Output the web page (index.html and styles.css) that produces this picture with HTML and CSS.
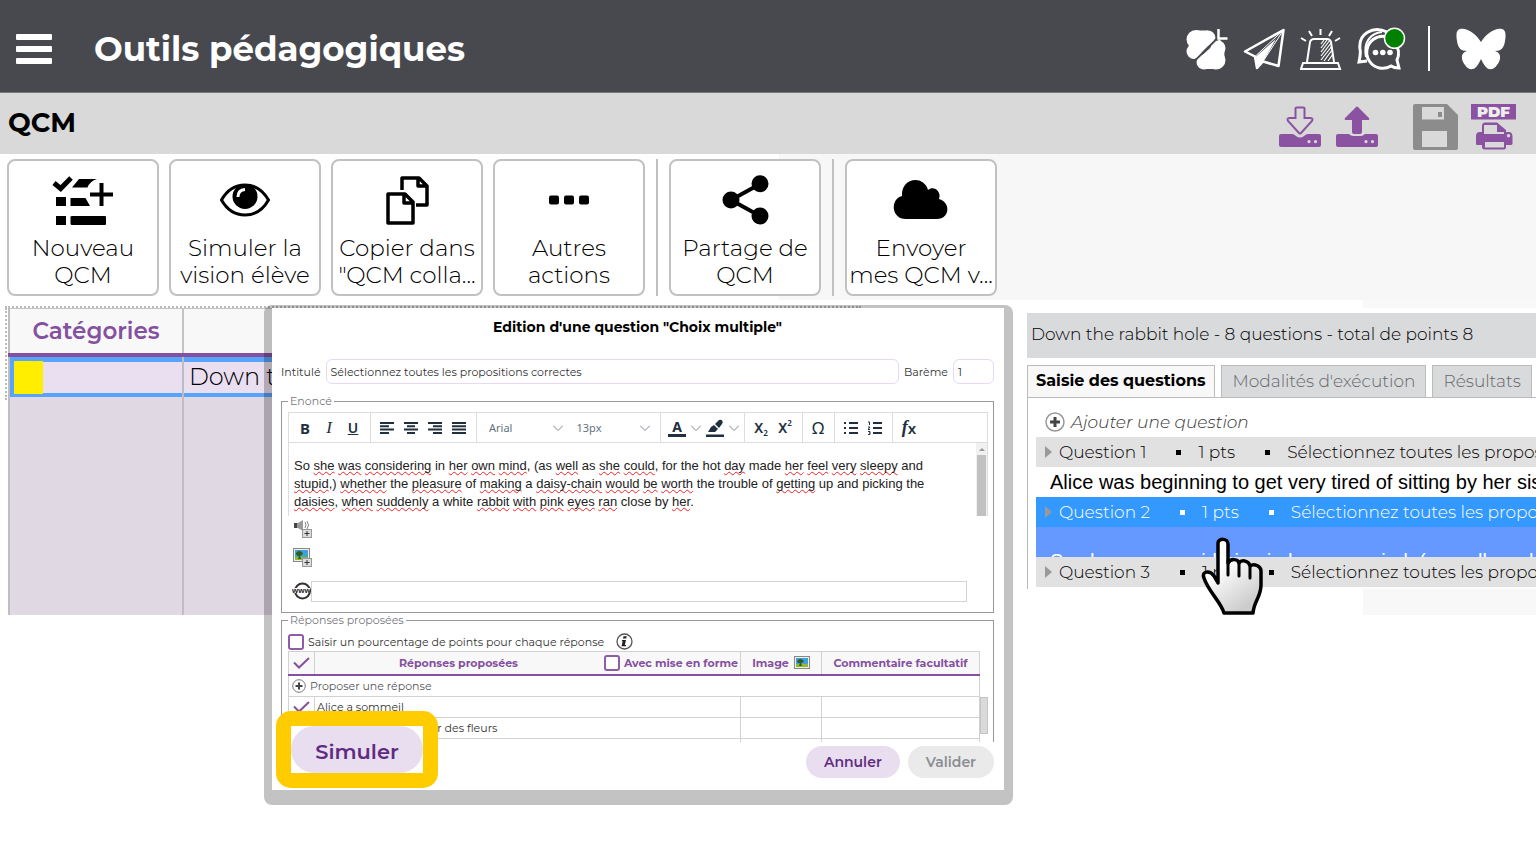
FILE: index.html
```html
<!DOCTYPE html>
<html lang="fr">
<head>
<meta charset="utf-8">
<title>Outils pédagogiques - QCM</title>
<link rel="stylesheet" href="styles.css">
</head>
<body>
<header class="topbar">
  <button class="icon-btn" aria-label="Menu"><svg width="36" height="30" viewBox="0 0 36 30" fill="#fff"><rect width="36" height="6" rx="1"/><rect y="12" width="36" height="6" rx="1"/><rect y="24" width="36" height="6" rx="1"/></svg></button>
  <h1 class="app-title">Outils pédagogiques</h1>
  <nav class="top-icons">
    <button class="icon-btn" aria-label="Trèfle"><svg width="42" height="42" viewBox="0 0 42 42" fill="#fff"><clipPath id="up"><path d="M0 0H30V10L9 31H0Z"/></clipPath><clipPath id="down"><path d="M42 9H34L10 33V42H42Z"/></clipPath><g clip-path="url(#up)"><circle cx="10" cy="11.500" r="9.500"/><circle cx="22" cy="10" r="7.500"/><circle cx="8" cy="23.500" r="7.500"/><path d="M2 12H29V30H8Z"/><path d="M10 2.500H22V14H10Z"/></g><g clip-path="url(#down)"><circle cx="30" cy="32" r="9.500"/><circle cx="32" cy="20" r="7.500"/><circle cx="18" cy="34" r="7.500"/><path d="M11 32 34 11 38.500 24 38 33 30 41H20Z"/></g><path d="M32.500 1v9.500h9" fill="none" stroke="#fff" stroke-width="2.500"/></svg></button>
    <button class="icon-btn" aria-label="Envoyer"><svg width="42" height="42" viewBox="0 0 42 42" fill="none" stroke="#fff" stroke-width="2.500" stroke-linejoin="round"><path d="M40.500 2 2 23.500 12 28.500 14 40 20 33.500 35.500 38Z"/><path d="M40.500 2 12 28.500 14 40 20 33.500Z" stroke-width="1"/><path d="M33 11 20 33.500 14 40 13 28.500Z" fill="#fff" stroke="none"/></svg></button>
    <button class="icon-btn" aria-label="Alerte"><svg width="42" height="42" viewBox="0 0 42 42" fill="none" stroke="#fff" stroke-width="2"><path d="M1 41h39l-2-6H3ZM7 34 10 14Q11 11 14 11H27Q30 11 31 14L34 34M20.500 1v6M9 3l3 5M32 3l-3 5M1 10l5 3M40 10l-5 3"/><path d="M21 16l3-4M21 20l6-8M21 24l9-12M21 28l10-13M21 32l11-14M24 33l8-11M28 33l5-7" stroke-width="1.200"/></svg></button>
    <button class="icon-btn" aria-label="Messagerie"><svg width="50" height="46" viewBox="0 0 50 46"><path d="M30 6C16-1 1 8 3 23Q4 27 2 36L10 35" fill="none" stroke="#fff" stroke-width="3"/><path d="M25 6C13 7 6 17 9 31" fill="none" stroke="#fff" stroke-width="2"/><path d="M38 16A16 16 0 1 0 34 40Q37 42 42 42Q41 38 40 34Q44 26 38 16Z" fill="none" stroke="#fff" stroke-width="3"/><g fill="#fff"><circle cx="18.500" cy="26.500" r="2.800"/><circle cx="25.800" cy="26.500" r="2.800"/><circle cx="33" cy="26.500" r="2.800"/></g><circle cx="37.500" cy="12.300" r="10" fill="green" stroke="#fff" stroke-width="1.500"/></svg></button>
    <span class="top-sep"></span>
    <button class="icon-btn" aria-label="Papillon"><svg width="50" height="42" viewBox="0 0 50 42" fill="#fff"><path d="M25 14C21 7 11-1 4 1C0 2 0 7 1 13C2 20 5 23 11 23C4 25 5 32 9 37C13 43 18 42 21 38C23 35 24 33 25 31C26 33 27 35 29 38C32 42 37 43 41 37C45 32 46 25 39 23C45 23 48 20 49 13C50 7 50 2 46 1C39-1 29 7 25 14Z"/></svg></button>
  </nav>
</header>
<div class="subbar">
  <h2 class="page-title">QCM</h2>
  <div class="sub-icons">
    <button class="icon-btn" aria-label="Importer"><svg width="42" height="42" viewBox="0 0 42 42" fill="#8b52a1"><path d="M16.500 2.500Q16.500 1.500 17.500 1.500H24.500Q25.500 1.500 25.500 2.500V12H31.500Q34.500 12.500 33 15L22 27Q21 28 20 27L9 15Q7.500 12.500 10.500 12H16.500Z" fill="none" stroke="#8b52a1" stroke-width="2"/><path fill-rule="evenodd" d="M2 28H13Q15 28 17 30Q21 33 25 30Q27 28 29 28H40Q42 28 42 30V39Q42 41 40 41H2Q0 41 0 39V30Q0 28 2 28ZM30 34a1.600 1.600 0 1 0 .01 0ZM36.500 34a1.600 1.600 0 1 0 .01 0Z"/></svg></button>
    <button class="icon-btn" aria-label="Exporter"><svg width="42" height="42" viewBox="0 0 42 42" fill="#8b52a1"><path d="M20 1Q21 0 22 1L33 12Q34 14 32 14H26V26Q26 28 24 28H18Q16 28 16 26V14H10Q8 14 9 12Z"/><path fill-rule="evenodd" d="M2 28H13Q15 30 17 30H25Q27 30 29 28H40Q42 28 42 30V39Q42 41 40 41H2Q0 41 0 39V30Q0 28 2 28ZM30 34a1.600 1.600 0 1 0 .01 0ZM36.500 34a1.600 1.600 0 1 0 .01 0Z"/></svg></button>
    <button class="icon-btn save" aria-label="Enregistrer"><svg width="46" height="46" viewBox="0 0 46 46" fill="#8c8c8c"><path fill-rule="evenodd" d="M2 0H34L45 11V44Q45 46 43 46H2Q0 46 0 44V2Q0 0 2 0ZM9 3V15.500H31V3ZM9 27V43H34V27ZM25 8h4v5h-4Z"/></svg></button>
    <button class="icon-btn" aria-label="Imprimer en PDF"><svg width="46" height="46" viewBox="0 0 46 46" fill="#8b52a1"><rect width="45" height="15.500"/><text x="22.500" y="13" text-anchor="middle" class="pdf-text">PDF</text><path fill-rule="evenodd" d="M11 22Q11 18.500 14 18.500H26L35 26V28H38Q41 28 41.500 32V40Q41 41 40 41H35V43Q35 45.500 33 45.500H14Q11 45.500 11 43V41H6Q5 41 5 40V32Q5 28 9 28H11ZM13 21V30H33V28H26V21ZM14 38V43.500H33V38ZM37.500 30a1.700 1.700 0 1 0 .01 0Z"/></svg></button>
  </div>
</div>
<div class="toolbar">
  <button class="tool"><svg width="62" height="52" viewBox="0 0 62 52"><path d="M2 9 8.700 14.500 19 4" fill="none" stroke="#000" stroke-width="5"/><path d="M27 5H45Q38 7 35.500 13.500H20ZM4 23h10v9H4ZM18.500 24h15L38 32H18.500ZM4 42h10v9H4ZM20 42H53Q54 42 54 43V50Q54 51 53 51H20Q18.500 51 18.500 49.500V43Q18.500 42 20 42Z"/><path d="M49.500 9V32M38 20.500H61" stroke="#000" stroke-width="4"/></svg><span>Nouveau<br>QCM</span></button>
  <button class="tool"><svg width="62" height="52" viewBox="0 0 62 52"><path d="M7.500 26Q16 11 31 11T54.500 26Q46 41 31 41T7.500 26Z" fill="none" stroke="#000" stroke-width="3"/><circle cx="31" cy="22.500" r="12.500"/><path d="M24 23Q24 16 31 15.500" fill="none" stroke="#fff" stroke-width="3"/></svg><span>Simuler la<br>vision élève</span></button>
  <button class="tool"><svg width="62" height="52" viewBox="0 0 62 52" fill="none" stroke="#000" stroke-width="4" stroke-linejoin="round"><path d="M26 16V4H43L51 12V31H40M42 4V12H50" stroke-width="3.500"/><path d="M12 20H29L37 28V49H12ZM28 20V29H37" stroke-width="3.500"/></svg><span>Copier dans<br>"QCM colla...</span></button>
  <button class="tool"><svg width="62" height="52" viewBox="0 0 62 52"><rect x="11" y="21.500" width="10" height="9" rx="2"/><rect x="26" y="21.500" width="10" height="9" rx="2"/><rect x="41" y="21.500" width="10" height="9" rx="2"/></svg><span>Autres<br>actions</span></button>
  <span class="tool-sep"></span>
  <button class="tool"><svg width="62" height="52" viewBox="0 0 62 52"><path d="M46 10 17 26 46 42" fill="none" stroke="#000" stroke-width="4"/><circle cx="46" cy="9.700" r="8.500"/><circle cx="17" cy="26" r="8.500"/><circle cx="46" cy="42" r="8.500"/></svg><span>Partage de<br>QCM</span></button>
  <span class="tool-sep"></span>
  <button class="tool"><svg width="62" height="52" viewBox="0 0 62 52"><path d="M16 45C1 45 0 25 12 22C11 3 34 1 38 16C43 11 52 17 49 25C61 28 60 45 47 45Z"/></svg><span>Envoyer<br>mes QCM v...</span></button>
</div>
<main class="workspace">
  <section class="list-area">
    <div class="list-frame">
      <table class="qcm-table">
        <thead><tr><th class="cat-col">Catégories</th><th></th></tr></thead>
        <tbody>
          <tr class="selected"><td><span class="swatch"></span></td><td>Down t</td></tr>
          <tr class="filler"><td></td><td></td></tr>
        </tbody>
      </table>
    </div>
  </section>
  <section class="detail">
    <div class="strip"></div>
    <div class="detail-head">Down the rabbit hole - 8 questions - total de points 8</div>
    <div class="tabs">
      <button class="tab active">Saisie des questions</button>
      <button class="tab">Modalités d'exécution</button>
      <button class="tab">Résultats</button>
    </div>
    <div class="tab-body">
      <button class="add-question"><svg width="20" height="20" viewBox="0 0 20 20" fill="none"><circle cx="10" cy="10" r="9" stroke="#999" stroke-width="1.500"/><path d="M10 5v10M5 10h10" stroke="#444" stroke-width="3"/></svg><span>Ajouter une question</span></button>
      <div class="q-row"><i class="tri"></i><span>Question 1</span><i class="dot"></i><span>1 pts</span><i class="dot"></i><span>Sélectionnez toutes les propositions correctes</span></div>
      <div class="q-text">Alice was beginning to get very tired of sitting by her sister on the bank</div>
      <div class="q-row current"><i class="tri"></i><span>Question 2</span><i class="dot"></i><span>1 pts</span><i class="dot"></i><span>Sélectionnez toutes les propositions correctes</span></div>
      <div class="q-text current-text">So she was considering in her own mind, (as well as she could, for the hot day</div>
      <div class="q-row"><i class="tri"></i><span>Question 3</span><i class="dot"></i><span>1 pts</span><i class="dot"></i><span>Sélectionnez toutes les propositions correctes</span></div>
    </div>
    <div class="strip tall"></div>
    <svg class="hand" width="64" height="80" viewBox="0 0 64 80"><defs><linearGradient id="skin" x2=".6" y2="1"><stop offset=".4" stop-color="#fff"/><stop offset="1" stop-color="#ccc"/></linearGradient></defs><path d="M17 6C17 1 27 1 27 7V26C30 21 37 22 38 26C41 22 48 24 49 29C53 26 60 29 60 34V48C60 60 53 64 52 76H23C20 65 7 54 3 41C0 34 9 33 13 39L17 46Z" fill="url(#skin)" stroke="#000" stroke-width="3.500" stroke-linejoin="round"/><path d="M27 24V38M38 27V39M49 30V41" stroke="#000" stroke-width="3" stroke-linecap="round"/></svg>
  </section>

  <div class="modal" role="dialog" aria-labelledby="dlg-title">
    <h3 class="modal-title" id="dlg-title">Edition d'une question "Choix multiple"</h3>
    <div class="form-row">
      <label for="intitule">Intitulé</label>
      <input class="field grow" id="intitule" value="Sélectionnez toutes les propositions correctes">
      <label for="bareme">Barème</label>
      <input class="field short" id="bareme" value="1">
    </div>
    <fieldset class="group">
      <legend>Enoncé</legend>
      <div class="editor">
        <div class="ed-bar">
          <div class="ed-group"><button class="ed-btn bold">B</button><button class="ed-btn italic">I</button><button class="ed-btn underline">U</button></div>
          <div class="ed-group">
            <button class="ed-btn" aria-label="Gauche"><svg width="14" height="12" viewBox="0 0 14 12"><path d="M0 1h14M0 4.300h9M0 7.600h14M0 11h9"/></svg></button>
            <button class="ed-btn" aria-label="Centre"><svg width="14" height="12" viewBox="0 0 14 12"><path d="M0 1h14M3 4.300h8M0 7.600h14M3 11h8"/></svg></button>
            <button class="ed-btn" aria-label="Droite"><svg width="14" height="12" viewBox="0 0 14 12"><path d="M0 1h14M5 4.300h9M0 7.600h14M5 11h9"/></svg></button>
            <button class="ed-btn" aria-label="Justifier"><svg width="14" height="12" viewBox="0 0 14 12"><path d="M0 1h14M0 4.300h14M0 7.600h14M0 11h14"/></svg></button>
          </div>
          <div class="ed-group selects">
            <select class="ed-select" aria-label="Police"><option>Arial</option></select><svg class="chev" width="10" height="6" viewBox="0 0 10 6"><path d="M0 .5 5 5.500 10 .5"/></svg>
            <select class="ed-select" aria-label="Taille"><option>13px</option></select><svg class="chev" width="10" height="6" viewBox="0 0 10 6"><path d="M0 .5 5 5.500 10 .5"/></svg>
          </div>
          <div class="ed-group colors">
            <button class="ed-btn color-a">A</button><svg class="chev" width="10" height="6" viewBox="0 0 10 6"><path d="M0 .5 5 5.500 10 .5"/></svg>
            <button class="ed-btn" aria-label="Surligner"><svg class="pen" width="18" height="18" viewBox="0 0 18 18"><path d="M0 15.500h18v2.500H0ZM2 13 5 8 8 6 12 10 9 13ZM9 5 13 1Q15 0 16.500 2Q17 4 16 5L13 9Z"/></svg></button><svg class="chev" width="10" height="6" viewBox="0 0 10 6"><path d="M0 .5 5 5.500 10 .5"/></svg>
          </div>
          <div class="ed-group"><button class="ed-btn math">X<sub>2</sub></button><button class="ed-btn math">X<sup>2</sup></button></div>
          <div class="ed-group"><button class="ed-btn omega">Ω</button></div>
          <div class="ed-group">
            <button class="ed-btn" aria-label="Puces"><svg width="14" height="12" viewBox="0 0 14 12"><path d="M5 1h9M5 6h9M5 11h9M0 1h2M0 6h2M0 11h2"/></svg></button>
            <button class="ed-btn" aria-label="Numéros"><svg width="14" height="14" viewBox="0 0 14 14"><path d="M5 2h9M5 7h9M5 12h9"/><path d="M0 1h1.500v3M0 6h2L0 8.500h2M0 10.500h2v3H0M1 12h1" class="thin"/></svg></button>
          </div>
          <div class="ed-group"><button class="ed-btn fx"><i>f</i>x</button></div>
        </div>
        <div class="ed-body">
          <p class="ed-text">So <u>she</u> <u>was</u> <u>considering</u> in <u>her</u> <u>own</u> <u>mind</u>, (as <u>well</u> as <u>she</u> <u>could</u>, for the hot <u>day</u> made <u>her</u> <u>feel</u> <u>very</u> <u>sleepy</u> and <u>stupid</u>,) <u>whether</u> the <u>pleasure</u> of <u>making</u> a <u>daisy-chain</u> <u>would</u> <u>be</u> <u>worth</u> the trouble of <u>getting</u> up and picking the <u>daisies</u>, <u>when</u> <u>suddenly</u> a white <u>rabbit</u> <u>with</u> <u>pink</u> <u>eyes</u> <u>ran</u> close by <u>her</u>.</p>
          <div class="ed-scroll"><i></i></div>
        </div>
      </div>
      <div class="media">
        <button class="icon-btn" aria-label="Ajouter un son"><svg width="19" height="19" viewBox="0 0 19 19"><path d="M1 4H5L10 1V12L5 9H1Z" fill="#999"/><path d="M1 4H4V9H1Z" fill="#444"/><path d="M12 3Q14 6 12 9M14 2Q17 6 14 10" fill="none" stroke="#888"/><rect x="9.500" y="10.500" width="9" height="8" fill="#ddd" stroke="#999"/><path d="M14 12v5M11.500 14.500h5" stroke="#333"/></svg></button>
        <button class="icon-btn" aria-label="Ajouter une image"><svg width="19" height="19" viewBox="0 0 19 19"><rect x=".5" y=".5" width="16" height="13" fill="#eee" stroke="#888"/><rect x="2" y="2" width="13" height="10" fill="#3fa0e0"/><path d="M2 9h13v3H2Z" fill="#8dbb2c"/><path d="M3 5Q6 1 10 5Q9 8 7 8L8 11H5L6 8Q3 8 3 5Z" fill="#345c14"/><rect x="9.500" y="10.500" width="9" height="8" fill="#ddd" stroke="#999"/><path d="M14 12v5M11.500 14.500h5" stroke="#333"/></svg></button>
      </div>
      <div class="www-row">
        <svg width="19" height="19" viewBox="0 0 19 19"><circle cx="10.500" cy="9" r="7.500" fill="#fff" stroke="#333" stroke-width="2"/><rect y="6" width="18" height="5" fill="#fff"/><text x="0" y="11" class="www-text">www</text></svg>
        <input class="url" aria-label="Lien">
      </div>
    </fieldset>
    <div class="clip">
      <fieldset class="group answers">
        <legend>Réponses proposées</legend>
        <div class="pct-row"><input type="checkbox" class="check" id="pct"><label for="pct">Saisir un pourcentage de points pour chaque réponse</label><svg width="17" height="17" viewBox="0 0 17 17"><circle cx="8.500" cy="8.500" r="7.500" fill="#fff" stroke="#555" stroke-width="1.300"/><path d="M7.500 3.200h3.200l-.5 2.200H7ZM6 7h4l-1.200 5h1.200v1.300H5.500L6.700 8.300H5.800Z" fill="#222"/></svg></div>
        <div class="answers-wrap">
          <table class="answers-table">
            <colgroup><col class="c-check"><col><col class="c-img"><col class="c-com"></colgroup>
            <thead><tr><th><svg width="17" height="12" viewBox="0 0 17 12"><path d="M1 5.500 6 10.500 16 1"/></svg></th><th><div class="th-split"><span>Réponses proposées</span><input type="checkbox" class="check" id="fmt"><label for="fmt">Avec mise en forme</label></div></th><th><div class="th-img">Image <svg width="16" height="13" viewBox="0 0 16 13"><rect x=".5" y=".5" width="15" height="12" fill="#eee" stroke="#888"/><rect x="2" y="2" width="12" height="9" fill="#3fa0e0"/><path d="M2 8h12v3H2Z" fill="#8dbb2c"/><path d="M3 5Q6 1 10 5Q9 7 7 7L8 10H5L6 7Q3 7 3 5Z" fill="#345c14"/></svg></div></th><th>Commentaire facultatif</th></tr></thead>
            <tbody>
              <tr class="add-row"><td colspan="4"><button class="add-answer"><svg width="14" height="14" viewBox="0 0 14 14" fill="none"><circle cx="7" cy="7" r="6.300" stroke="#777"/><path d="M7 3.500v7M3.500 7h7" stroke="#444" stroke-width="2"/></svg>Proposer une réponse</button></td></tr>
              <tr><td class="mid"><svg width="17" height="12" viewBox="0 0 17 12"><path d="M1 5.500 6 10.500 16 1"/></svg></td><td>Alice a sommeil</td><td></td><td></td></tr>
              <tr><td></td><td>Alice a envie de cueillir des fleurs</td><td></td><td></td></tr>
              <tr><td></td><td></td><td></td><td></td></tr>
            </tbody>
          </table>
          <div class="ans-scroll"><i></i></div>
        </div>
      </fieldset>
    </div>
    <div class="modal-foot"><button class="pill">Annuler</button><button class="pill off" disabled>Valider</button></div>
    <div class="spot"><button class="pill big">Simuler</button></div>
  </div>
</main>
</body>
</html>
```
FILE: styles.css
```css
* { box-sizing: border-box; }
body { margin: 0; min-height: 100vh; background: #fff; color: #000; font-family: Montserrat, Inter, "Open Sans", sans-serif; overflow-x: hidden; }
button { font: inherit; color: inherit; cursor: pointer; padding: 0; border: 0; background: none; }
svg { display: block; flex: none; }
h1, h2, h3, p { margin: 0; }
.icon-btn { display: block; }

.topbar { display: flex; align-items: center; height: 93px; padding: 5px 30px 0 16px; background: #48494e; border-bottom: 1px solid #77787b; color: #fff; }
.app-title { margin-left: 42px; font-size: 34px; line-height: 44px; font-weight: 700; }
.top-icons { display: flex; align-items: center; gap: 15px; margin-left: auto; }
.top-sep { width: 2px; height: 45px; margin: 0 11px 0 6px; background: #fff; }

.subbar { display: flex; align-items: center; height: 61px; padding: 0 19px 2px 8px; background: #d9d9d9; }
.page-title { font-size: 27px; line-height: 32px; font-weight: 700; }
.sub-icons { display: flex; align-items: center; gap: 15px; margin: 8px 0 0 auto; }
.save { margin-left: 20px; margin-right: -3px; }
.pdf-text { font: 900 15px Montserrat, Inter, sans-serif; fill: #eee; }

.toolbar { display: flex; gap: 10px; height: 146px; padding: 5px 7px 4px; background: linear-gradient(to right, #fff 50.7%, #f7f7f7 0); }
.tool { display: flex; flex-direction: column; align-items: center; width: 152px; padding-top: 13px; border: 2px solid #c1c1c1; border-radius: 8px; background: #fff; font-size: 23px; font-weight: 300; line-height: 27px; white-space: nowrap; }
.tool span { margin-top: 9px; }
.tool-sep { width: 2px; margin: 0 1px; background: #c1c1c1; }

.workspace { position: relative; display: grid; grid-template-columns: minmax(0, 2fr) minmax(0, 1fr); align-items: start; }
.list-area { padding: 6px 0 0 5px; }
.list-frame { width: 84%; border-top: 2px dotted #bbb; padding-left: 3px; position: relative; }
.list-frame::before { content: ""; position: absolute; left: 0; top: 0; height: 92px; border-left: 2px dotted #bbb; }
.qcm-table { width: 100%; border-collapse: collapse; border-left: 2px solid #bfbdc1; font-size: 23px; }
.cat-col { width: 174px; }
.qcm-table th { height: 46px; padding: 0; background: #f8f8f8; color: #8550a0; border-top: 1px solid #c4c4c4; border-right: 2px solid #c4c4c4; border-bottom: 4px solid #8550a0; font-weight: 600; }
.qcm-table td { padding: 0; border-right: 2px solid #bfbdc1; background: #e0d9e4; }
.qcm-table .selected td { height: 42px; padding: 0 5px; background: #eadff0; box-shadow: inset 0 5px #58a4fb, inset 0 -4px #58a4fb; white-space: nowrap; font-weight: 300; font-size: 24px; }
.qcm-table .selected td:first-child { padding: 1px 0 0 4px; box-shadow: inset 4px 5px #58a4fb, inset 0 -4px #58a4fb; }
.qcm-table .filler td { height: 218px; }
.swatch { display: block; width: 29px; height: 33px; background: #ffee00; }

.detail { position: relative; padding-left: 3px; }
.strip { width: 34%; height: 8px; margin-left: auto; background: #f8f8f8; }
.strip.tall { height: 26px; }
.detail-head { margin-top: 5px; height: 45px; padding: 0 4px; background: #d9dadc; font-size: 17px; font-weight: 300; line-height: 43px; white-space: nowrap; }
.tabs { display: flex; gap: 6px; margin-top: 7px; border-bottom: 1px solid #bbb; }
.tab { height: 32px; padding: 0 10px 2px; border: 1px solid #bbb; border-bottom: 0; background: #d9dadc; color: #66676b; font-size: 17px; font-weight: 300; white-space: nowrap; }
.tab.active { padding: 0 9px 2px 8px; margin-bottom: -1px; background: #f8f8f8; color: #000; font-size: 16px; font-weight: 700; }
.tab-body { border-left: 1px solid #bbb; padding: 8px 0 2px 8px; overflow: hidden; }
.add-question { display: flex; align-items: center; gap: 6px; height: 31px; padding-left: 9px; color: #333; font-size: 17px; font-weight: 300; font-style: italic; }
.q-row { display: flex; align-items: center; height: 30px; padding-left: 9px; background: #e1e1e1; font-size: 17px; font-weight: 300; white-space: nowrap; }
.q-row.current { background: #39f; color: #fff; }
.tri { flex: none; border: 6px solid transparent; border-left: 7px solid #999; border-right: 0; width: 0; margin-right: 7px; }
.dot { flex: none; width: 5px; height: 5px; margin: 0 17px 0 30px; background: currentColor; }
.q-text { height: 30px; padding-left: 14px; font: 20px/31px "Liberation Sans", Arial, sans-serif; white-space: nowrap; overflow: hidden; }
.current-text { background: #69f; color: #fff; padding-top: 19px; }
.hand { position: absolute; left: 177px; top: 237px; }

.modal { position: absolute; left: 264px; top: 5px; width: 749px; border: solid rgba(0, 0, 0, .235); border-width: 3px 9px 15px 8px; border-radius: 8px; background: #fff; background-clip: padding-box; padding: 0 10px 12px 9px; font-size: 11px; color: #333; }
.modal-title { height: 38px; line-height: 38px; text-align: center; font-size: 14px; font-weight: 700; color: #000; }
.form-row { display: flex; align-items: center; gap: 5px; margin-top: 13px; height: 25px; }
.field { height: 25px; min-width: 0; padding: 0 4px; border: 1px solid #e5d9f5; border-radius: 6px; font: inherit; color: #333; background: #fff; }
.grow { flex: 1; }
.short { width: 41px; }
.group { min-width: 0; margin: 10px 0 0; padding: 4px 5px 10px 6px; border: 1px solid #98989c; }
.group legend { margin-left: 0; padding: 0 2px; line-height: 14px; color: #76767c; }
.editor { border: 1px solid #ddd; border-bottom: 0; }
.ed-bar { display: flex; height: 30px; border-bottom: 1px solid #ddd; color: #222f3e; }
.ed-group { display: flex; align-items: center; padding: 0 5px 0 4px; border-right: 1px solid #ddd; }
.ed-group:last-child { border-right: 0; }
.ed-btn { display: flex; align-items: center; justify-content: center; width: 24px; height: 28px; font-family: "Noto Sans", sans-serif; font-size: 15px; }
.ed-btn path { stroke: #222f3e; stroke-width: 2; }
.ed-btn .thin { stroke-width: 1; fill: none; }
.ed-btn .pen path { stroke: none; fill: #222f3e; }
.bold { font-weight: 700; }
.italic { font-family: "Liberation Serif", serif; font-style: italic; font-size: 17px; }
.underline { text-decoration: underline; font-weight: 600; font-size: 14px; }
.color-a { width: 18px; height: 18px; border-bottom: 3px solid #222f3e; font-weight: 700; font-size: 14px; }
.math { font-size: 14px; font-weight: 600; }
.math sub, .math sup { font-size: 8px; line-height: 8px; }
.math sub { align-self: flex-end; margin-bottom: 5px; }
.math sup { align-self: flex-start; margin-top: 5px; }
.omega { width: 22px; font-size: 17px; }
.fx { font-weight: 600; }
.fx i { font-family: "Liberation Serif", serif; font-size: 18px; }
.chev path { fill: none; stroke: #808995; stroke-width: 1; }
.selects { width: 184px; padding: 0 10px 0 12px; gap: 0; }
.ed-select { flex: 1; min-width: 0; padding: 0; border: 0; appearance: none; background: none; color: #66717d; font: 11px "Noto Sans", sans-serif; }
.selects .ed-select ~ .ed-select { margin-left: 14px; }
.colors { gap: 5px; padding: 0 5px 0 7px; }
.colors .ed-btn { width: 18px; }
.ed-body { display: flex; height: 73px; }
.ed-text { flex: 1; padding: 14px 40px 0 5px; font: 13px/18px "Liberation Sans", Arial, sans-serif; color: #222; }
.ed-text u { text-decoration: underline wavy #e22 1px; text-underline-offset: 1px; text-decoration-skip-ink: none; }
.ed-scroll { width: 11px; padding-top: 12px; background: #f1f1f1; position: relative; }
.ed-scroll::before { content: ""; position: absolute; left: 3px; top: 5px; border: 3px solid transparent; border-top: 0; border-bottom: 3px solid #999; }
.ed-scroll i { display: block; height: 61px; margin: 0 1px; background: #c1c1c1; }
.media { display: grid; gap: 10px; padding: 3px 5px 0; justify-items: start; }
.www-row { display: flex; align-items: center; padding: 14px 21px 0 4px; }
.www-text { font: 700 8px "Liberation Sans", sans-serif; fill: #222; }
.url { flex: 1; height: 21px; border: 1px solid #d4d4d4; background: #fff; }
.clip { height: 129px; overflow: hidden; }
.answers { margin: 0; padding: 6px 5px 10px 6px; }
.pct-row { display: flex; align-items: center; height: 17px; gap: 4px; }
.pct-row svg { margin-left: 8px; }
.check { appearance: none; flex: none; width: 16px; height: 16px; margin: 0; border: 2px solid #8f5da8; border-radius: 3px; background: #fff; }
.answers-wrap { display: flex; margin-top: 1px; }
.answers-table { flex: 1; table-layout: fixed; border-collapse: collapse; font-size: 11px; }
.answers-table th, .answers-table td { height: 21px; padding: 0 2px; border: 1px solid #d2d2d2; white-space: nowrap; line-height: 14px; }
.answers-table th { height: 23px; border-bottom: 2px solid #8550a0; background: #f8f8f8; color: #8550a0; font-weight: 700; }
.answers-table .add-row td { height: 22px; }
.answers-table path:only-child { fill: none; stroke: #8550a0; stroke-width: 2; }
.c-check { width: 26px; }
.c-img { width: 81px; }
.c-com { width: 158px; }
.th-split { display: flex; align-items: center; gap: 4px; }
.th-split span { flex: 1; }
.th-img { display: flex; align-items: center; justify-content: center; gap: 5px; }
.answers-table th > svg, .mid svg { margin: 0 auto; }
.add-answer { display: flex; align-items: center; gap: 4px; padding-left: 1px; color: #555; }
.ans-scroll { width: 8px; padding-top: 46px; }
.ans-scroll i { display: block; height: 37px; background: #d9dadc; border: 1px solid #c4c4c4; }
.modal-foot { display: flex; justify-content: flex-end; gap: 8px; margin-top: 4px; }
.pill { height: 32px; padding: 0 18px; border-radius: 16px; background: #e9deef; color: #5f2c82; font-size: 14px; font-weight: 600; }
.pill.off { background: #eaeaea; color: #8c8d91; }
.spot { position: absolute; left: 4px; bottom: 2px; width: 162px; height: 77px; border: 15px solid #fc0; border-radius: 15px; background: #fff; }
.pill.big { display: block; width: 100%; height: 47px; padding-top: 4px; border-radius: 24px; font-size: 21px; }
```
